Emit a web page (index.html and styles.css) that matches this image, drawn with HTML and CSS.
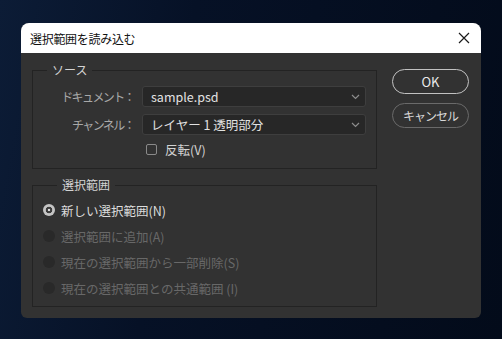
FILE: index.html
```html
<!DOCTYPE html>
<html lang="ja">
<head>
  <meta charset="UTF-8" />
  <title>選択範囲を読み込む</title>
  <link rel="stylesheet" href="styles.css">
</head>
<body>
  <div class="dialog">
    <div class="titlebar">
      <span class="title">選択範囲を読み込む</span>
      <svg class="close" width="12" height="12" viewBox="0 0 12 12">
        <path d="M1 1 L11 11 M11 1 L1 11" stroke="#1a1a1a" stroke-width="1.2" fill="none"/>
      </svg>
    </div>

    <div class="content">
      <div class="groups">
        <fieldset class="group source">
          <legend>ソース</legend>
          <div class="form-grid">
            <label class="field-label">ドキュメント：</label>
            <div class="select">
              <span>sample.psd</span>
              <svg width="9" height="6" viewBox="0 0 9 6"><path d="M1 1 L4.5 4.5 L8 1" stroke="#8c8c8c" stroke-width="1.2" fill="none"/></svg>
            </div>
            <label class="field-label">チャンネル：</label>
            <div class="select">
              <span>レイヤー 1 透明部分</span>
              <svg width="9" height="6" viewBox="0 0 9 6"><path d="M1 1 L4.5 4.5 L8 1" stroke="#8c8c8c" stroke-width="1.2" fill="none"/></svg>
            </div>
            <div></div>
            <div class="check-row">
              <span class="checkbox"></span>
              <span>反転(V)</span>
            </div>
          </div>
        </fieldset>

        <fieldset class="group selection">
          <legend>選択範囲</legend>
          <div class="radio-list">
            <div class="radio-row">
              <span class="radio checked"></span>
              <span>新しい選択範囲(N)</span>
            </div>
            <div class="radio-row disabled">
              <span class="radio"></span>
              <span>選択範囲に追加(A)</span>
            </div>
            <div class="radio-row disabled">
              <span class="radio"></span>
              <span>現在の選択範囲から一部削除(S)</span>
            </div>
            <div class="radio-row disabled">
              <span class="radio"></span>
              <span>現在の選択範囲との共通範囲 (I)</span>
            </div>
          </div>
        </fieldset>
      </div>

      <div class="buttons">
        <button class="btn primary">OK</button>
        <button class="btn">キャンセル</button>
      </div>
    </div>
  </div>
</body>
</html>
```

FILE: styles.css
```css
html, body {
  margin: 0;
  padding: 0;
}

body {
  width: 502px;
  height: 339px;
  overflow: hidden;
  font-family: "Noto Sans CJK JP", "Noto Sans", sans-serif;
  background: linear-gradient(100deg, #0c1c36 0%, #061126 35%, #030b1a 100%);
}

.dialog {
  margin: 23px 0 0 21px;
  width: 460px;
  height: 295px;
  background: #323232;
  border-radius: 8px 8px 6px 6px;
  overflow: hidden;
}

.titlebar {
  height: 30px;
  background: #fff;
  display: flex;
  align-items: center;
  justify-content: space-between;
  padding: 0 10px 0 9px;
}

.title {
  font-size: 12px;
  color: #111;
  letter-spacing: -0.3px;
}

.close {
  margin-right: 1px;
}

.content {
  display: flex;
  gap: 15px;
  padding: 9px 12px 0 11px;
}

.groups {
  width: 345px;
  display: flex;
  flex-direction: column;
  gap: 8px;
}

.group {
  margin: 0;
  border: 1px solid #232323;
  padding: 0;
  min-width: 0;
}

.group legend {
  font-size: 12px;
  line-height: 16px;
  color: #d4d4d4;
  margin-left: 14px;
  padding: 0 5px;
}

.source {
  padding: 8px 10px 11px 0;
}

.form-grid {
  display: grid;
  grid-template-columns: 101px 1fr;
  column-gap: 8px;
  row-gap: 7px;
  align-items: center;
}

.field-label {
  text-align: right;
  font-size: 12px;
  color: #a8a8a8;
  letter-spacing: -1.6px;
  white-space: nowrap;
}

.select {
  height: 21px;
  box-sizing: border-box;
  background: #272727;
  border: 1px solid #3e3e3e;
  border-radius: 3px;
  display: flex;
  align-items: center;
  justify-content: space-between;
  padding: 0 5px 0 8px;
  font-size: 12.5px;
  color: #e2e2e2;
}

.check-row {
  margin-top: -1px;
  height: 16px;
  display: flex;
  align-items: center;
  gap: 8px;
  padding-left: 4px;
  font-size: 12.5px;
  color: #d2d2d2;
}

.checkbox {
  width: 9px;
  height: 9px;
  border: 1px solid #8a8a8a;
  border-radius: 2px;
}

.selection {
  padding: 7px 10px 8px 10px;
}

.radio-list {
  display: flex;
  flex-direction: column;
  gap: 6px;
}

.radio-row {
  height: 20px;
  display: flex;
  align-items: center;
  gap: 6px;
  font-size: 12.5px;
  color: #dcdcdc;
}

.radio-row.disabled {
  color: #686868;
}

.radio {
  width: 12px;
  height: 12px;
  border-radius: 50%;
  background: #292929;
  flex: none;
}

.radio.checked {
  background: radial-gradient(circle, #dcdcdc 0 1.2px, #3c3c3c 1.6px 3px, #c4c4c4 3.6px);
}

.buttons {
  display: flex;
  flex-direction: column;
  gap: 9px;
  padding-top: 7px;
}

.btn {
  width: 77px;
  height: 25px;
  border-radius: 13px;
  background: transparent;
  border: 1.5px solid #6a6a6a;
  color: #d8d8d8;
  font-family: "Noto Sans CJK JP", "Noto Sans", sans-serif;
  font-size: 12px;
  letter-spacing: -1px;
  padding: 0;
}

.btn.primary {
  border-color: #c2c2c2;
  color: #eaeaea;
  font-size: 13px;
  letter-spacing: 0;
}
```
